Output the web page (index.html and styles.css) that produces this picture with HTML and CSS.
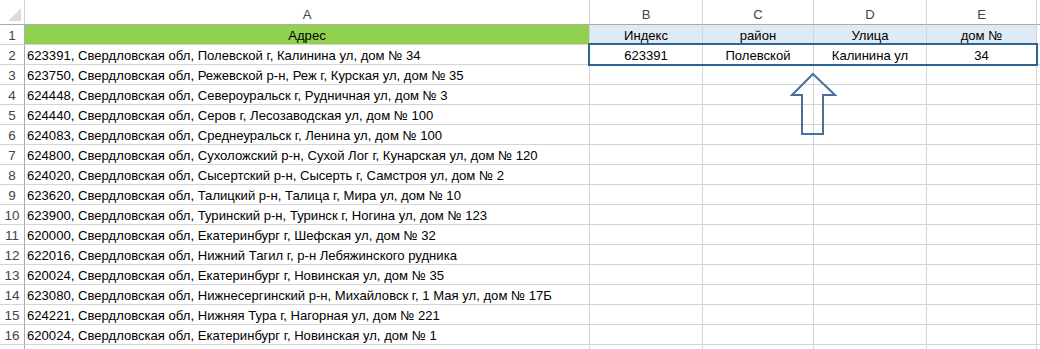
FILE: index.html
```html
<!DOCTYPE html>
<html>
<head>
<meta charset="utf-8">
<link rel="stylesheet" href="styles.css">
</head>
<body>
<div class="sheet">
  <div class="grid">
    <div class="hc corner"><span class="tri"></span></div>
    <div class="hc">A</div><div class="hc">B</div><div class="hc">C</div><div class="hc">D</div><div class="hc">E</div><div class="hc fill"></div>

    <div class="rh">1</div><div class="c green center">Адрес</div><div class="c blue center">Индекс</div><div class="c blue center">район</div><div class="c blue center">Улица</div><div class="c blue center">дом №</div><div class="c fill"></div>
    <div class="rh">2</div><div class="c">623391, Свердловская обл, Полевской г, Калинина ул, дом № 34</div><div class="c center">623391</div><div class="c center">Полевской</div><div class="c center">Калинина ул</div><div class="c center">34</div><div class="c fill"></div>
    <div class="rh">3</div><div class="c">623750, Свердловская обл, Режевской р-н, Реж г, Курская ул, дом № 35</div><div class="c"></div><div class="c"></div><div class="c"></div><div class="c"></div><div class="c fill"></div>
    <div class="rh">4</div><div class="c">624448, Свердловская обл, Североуральск г, Рудничная ул, дом № 3</div><div class="c"></div><div class="c"></div><div class="c"></div><div class="c"></div><div class="c fill"></div>
    <div class="rh">5</div><div class="c">624440, Свердловская обл, Серов г, Лесозаводская ул, дом № 100</div><div class="c"></div><div class="c"></div><div class="c"></div><div class="c"></div><div class="c fill"></div>
    <div class="rh">6</div><div class="c">624083, Свердловская обл, Среднеуральск г, Ленина ул, дом № 100</div><div class="c"></div><div class="c"></div><div class="c"></div><div class="c"></div><div class="c fill"></div>
    <div class="rh">7</div><div class="c">624800, Свердловская обл, Сухоложский р-н, Сухой Лог г, Кунарская ул, дом № 120</div><div class="c"></div><div class="c"></div><div class="c"></div><div class="c"></div><div class="c fill"></div>
    <div class="rh">8</div><div class="c">624020, Свердловская обл, Сысертский р-н, Сысерть г, Самстроя ул, дом № 2</div><div class="c"></div><div class="c"></div><div class="c"></div><div class="c"></div><div class="c fill"></div>
    <div class="rh">9</div><div class="c">623620, Свердловская обл, Талицкий р-н, Талица г, Мира ул, дом № 10</div><div class="c"></div><div class="c"></div><div class="c"></div><div class="c"></div><div class="c fill"></div>
    <div class="rh">10</div><div class="c">623900, Свердловская обл, Туринский р-н, Туринск г, Ногина ул, дом № 123</div><div class="c"></div><div class="c"></div><div class="c"></div><div class="c"></div><div class="c fill"></div>
    <div class="rh">11</div><div class="c">620000, Свердловская обл, Екатеринбург г, Шефская ул, дом № 32</div><div class="c"></div><div class="c"></div><div class="c"></div><div class="c"></div><div class="c fill"></div>
    <div class="rh">12</div><div class="c">622016, Свердловская обл, Нижний Тагил г, р-н Лебяжинского рудника</div><div class="c"></div><div class="c"></div><div class="c"></div><div class="c"></div><div class="c fill"></div>
    <div class="rh">13</div><div class="c">620024, Свердловская обл, Екатеринбург г, Новинская ул, дом № 35</div><div class="c"></div><div class="c"></div><div class="c"></div><div class="c"></div><div class="c fill"></div>
    <div class="rh">14</div><div class="c">623080, Свердловская обл, Нижнесергинский р-н, Михайловск г, 1 Мая ул, дом № 17Б</div><div class="c"></div><div class="c"></div><div class="c"></div><div class="c"></div><div class="c fill"></div>
    <div class="rh">15</div><div class="c">624221, Свердловская обл, Нижняя Тура г, Нагорная ул, дом № 221</div><div class="c"></div><div class="c"></div><div class="c"></div><div class="c"></div><div class="c fill"></div>
    <div class="rh">16</div><div class="c">620024, Свердловская обл, Екатеринбург г, Новинская ул, дом № 1</div><div class="c"></div><div class="c"></div><div class="c"></div><div class="c"></div><div class="c fill"></div>
    <div class="rh"></div><div class="c"></div><div class="c"></div><div class="c"></div><div class="c"></div><div class="c"></div><div class="c fill"></div>
  </div>
  <div class="selbox"></div>
  <svg class="arrow" width="50" height="70" viewBox="0 0 50 70">
    <polygon points="23,3 45,24 33,24 33,63 12,63 12,24 2,24" fill="none" stroke="#48709A" stroke-width="2" stroke-linejoin="miter"/>
  </svg>
</div>
</body>
</html>
```
FILE: styles.css
```css
html, body {
  margin: 0;
  padding: 0;
  background: #fff;
}
.sheet {
  position: relative;
  width: 1040px;
  height: 349px;
  overflow: hidden;
  font-family: "Liberation Sans", Arial, sans-serif;
  font-size: 13.1px;
  color: #000;
}
.grid {
  display: grid;
  grid-template-columns: 25px 565px 113px 111px 113px 110px 3px;
  grid-template-rows: 25px repeat(17, 20px);
}
.grid > div {
  box-sizing: border-box;
  border-right: 1px solid #D4D4D4;
  border-bottom: 1px solid #D4D4D4;
  white-space: nowrap;
  overflow: visible;
  display: flex;
  align-items: center;
  line-height: 17px;
  padding-top: 2px;
}
.hc {
  justify-content: center;
  color: #444;
  background: #fff;
  border-bottom: 1px solid #ABABAB !important;
  padding-top: 4px !important;
}
.corner {
  position: relative;
}
.tri {
  position: absolute;
  right: 3px;
  bottom: 3px;
  width: 0;
  height: 0;
  border-left: 13px solid transparent;
  border-bottom: 13px solid #DCDCDC;
}
.rh {
  justify-content: center;
  color: #444;
  background: #fff;
  font-size: 13.5px;
  border-right: 1px solid #ABABAB !important;
}
.c {
  padding-left: 2px;
}
.center {
  justify-content: center;
  padding-left: 0;
}
.green {
  background: #92D050;
}
.blue {
  background: #DDEBF7;
}
.fill {
  border-right: none !important;
}
.selbox {
  position: absolute;
  left: 588px;
  top: 43px;
  width: 446px;
  height: 19px;
  border: 2px solid #2F6391;
}
.arrow {
  position: absolute;
  left: 790px;
  top: 71px;
}
```
